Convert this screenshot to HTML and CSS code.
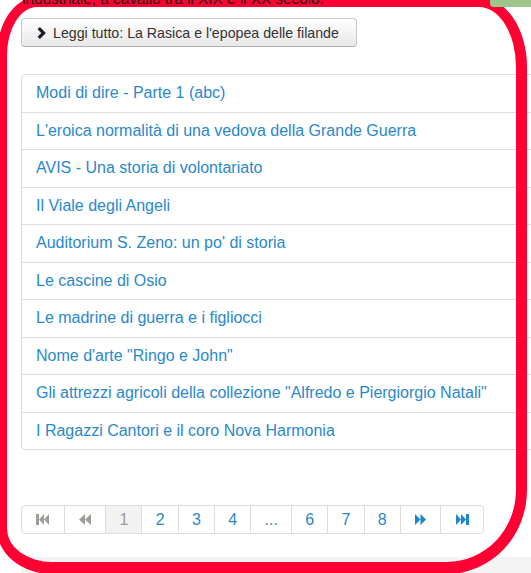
FILE: index.html
```html
<!DOCTYPE html>
<html lang="it">
<head>
<meta charset="utf-8">
<title>Articoli</title>
<link rel="stylesheet" href="styles.css">
</head>
<body>
<div class="page">
  <div class="intro">
    <p class="intro-text">industriale, a cavallo tra il XIX e il XX secolo.</p>
    <div class="side-tab"></div>
  </div>

  <div class="content">
    <a class="btn" href="#">
      <svg class="chev" viewBox="0 0 9 12" width="9" height="12"><path d="M0.6 2.3L2.9 0L8.9 6L2.9 12L0.6 9.7L4.3 6Z"/></svg>
      <span>Leggi tutto: La Rasica e l'epopea delle filande</span>
    </a>

    <ul class="list">
      <li><a href="#">Modi di dire - Parte 1 (abc)</a></li>
      <li><a href="#">L'eroica normalità di una vedova della Grande Guerra</a></li>
      <li><a href="#">AVIS - Una storia di volontariato</a></li>
      <li><a href="#">Il Viale degli Angeli</a></li>
      <li><a href="#">Auditorium S. Zeno: un po' di storia</a></li>
      <li><a href="#">Le cascine di Osio</a></li>
      <li><a href="#">Le madrine di guerra e i figliocci</a></li>
      <li><a href="#">Nome d'arte "Ringo e John"</a></li>
      <li><a href="#">Gli attrezzi agricoli della collezione "Alfredo e Piergiorgio Natali"</a></li>
      <li><a href="#">I Ragazzi Cantori e il coro Nova Harmonia</a></li>
    </ul>

    <nav class="pager">
      <span class="cell icon muted"><svg viewBox="0 0 13 11" width="13" height="11"><rect x="0" y="0" width="3" height="11"/><path d="M8 0L3 5.5L8 11Z M13 0L8 5.5L13 11Z"/></svg></span>
      <span class="cell icon muted"><svg viewBox="0 0 12 11" width="12" height="11"><path d="M6 0L0 5.5L6 11Z M12 0L6 5.5L12 11Z"/></svg></span>
      <span class="cell active">1</span>
      <a class="cell" href="#">2</a>
      <a class="cell" href="#">3</a>
      <a class="cell" href="#">4</a>
      <a class="cell dots" href="#">...</a>
      <a class="cell" href="#">6</a>
      <a class="cell" href="#">7</a>
      <a class="cell" href="#">8</a>
      <a class="cell icon" href="#"><svg viewBox="0 0 11 11" width="11" height="11"><path d="M0 0L5.5 5.5L0 11Z M5.5 0L11 5.5L5.5 11Z"/></svg></a>
      <a class="cell icon" href="#"><svg viewBox="0 0 13 11" width="13" height="11"><path d="M0 0L5 5.5L0 11Z M5 0L10 5.5L5 11Z"/><rect x="10" y="0" width="3" height="11"/></svg></a>
    </nav>
  </div>

  <div class="breadcrumb"><span class="crumb-label">Sei qui:</span> <span>Home</span></div>

  <div class="marker"></div>
</div>
</body>
</html>
```

FILE: styles.css
```css
html, body {
  margin: 0;
  padding: 0;
  overflow: hidden;
  background: #fff;
}

body {
  font-family: "Liberation Sans", Arial, sans-serif;
  color: #333;
}

.page {
  position: relative;
  height: 573px;
  overflow: hidden;
}

/* cropped tail of the article paragraph above */
.intro {
  position: relative;
  z-index: 2;
  height: 7px;
  display: flex;
  justify-content: space-between;
  overflow: hidden;
}

.intro-text {
  margin: -11px 0 0 22px;
  font-size: 15.3px;
  line-height: 20px;
  color: #2a1416;
  white-space: nowrap;
}

.side-tab {
  width: 41px;
  height: 7px;
  background: #9dc68a;
  border-bottom-left-radius: 4px;
}

.content {
  padding: 11px 0 0 21px;
  height: 539px;
}

.btn {
  display: inline-flex;
  align-items: center;
  gap: 7px;
  box-sizing: border-box;
  height: 29px;
  padding: 0 17px 0 15px;
  border: 1px solid #c8c8c8;
  border-bottom-color: #b0b0b0;
  border-radius: 4px;
  background: linear-gradient(#ffffff, #e8e8e8);
  color: #333;
  font-size: 14.2px;
  text-decoration: none;
}

.chev {
  fill: #1c1c28;
}

.list {
  list-style: none;
  margin: 27px -30px 0 0;
  padding: 0;
}

.list li {
  border: 1px solid #dddddd;
  margin-bottom: -1px;
  padding: 9px 14px;
  line-height: 18.5px;
  font-size: 16px;
}

.list li:first-child {
  border-radius: 4px 4px 0 0;
}

.list li:last-child {
  border-radius: 0 0 4px 4px;
}

.list a {
  color: #2a88cc;
  text-decoration: none;
}

.pager {
  display: inline-flex;
  margin-top: 56px;
  border: 1px solid #dddddd;
  border-radius: 4px;
}

.cell {
  display: flex;
  align-items: center;
  justify-content: center;
  height: 27px;
  padding: 0 13.2px;
  border-left: 1px solid #dddddd;
  font-size: 16px;
  color: #2a88cc;
  text-decoration: none;
  fill: #1a86d0;
}

.cell.icon {
  padding: 0 14.3px;
}

.cell:first-child {
  border-left: 0;
}

.cell.muted {
  fill: #a09c98;
}

.cell.active {
  background: #f2f2f2;
  color: #9a9a9a;
}

.breadcrumb {
  margin-left: 21px;
  background: #f3f3f3;
  padding: 7px 17px;
  font-size: 14px;
  line-height: 20px;
  color: #777;
}

/* hand-drawn red outline on top of the page */
.marker {
  position: absolute;
  z-index: 1;
  left: -3px;
  top: -3px;
  right: 4px;
  bottom: -1px;
  border: solid #ff0033;
  border-width: 10px 11px 12px 10px;
  border-radius: 40px 48px 80px 55px / 58px 70px 84px 45px;
  pointer-events: none;
}
```
